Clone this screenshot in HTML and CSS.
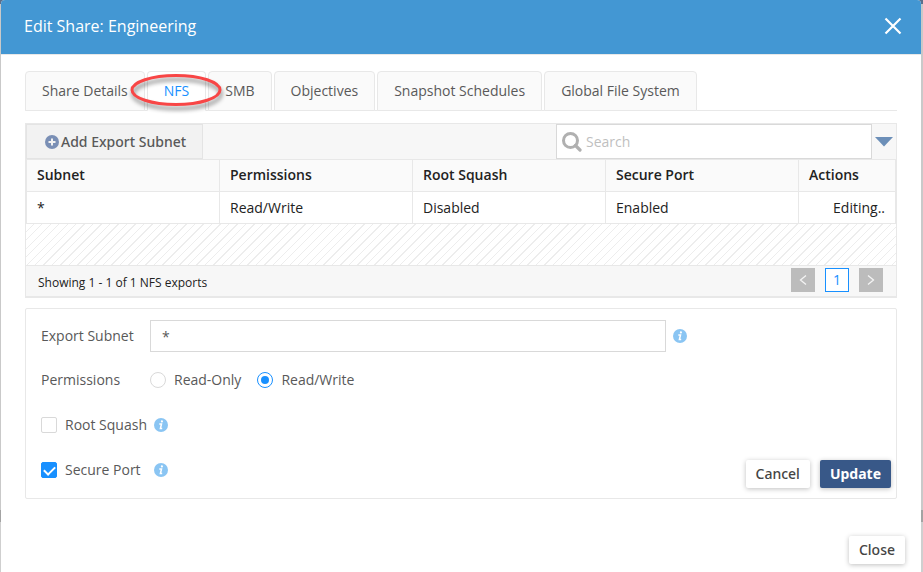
FILE: index.html
```html
<!DOCTYPE html>
<html lang="en">
<head>
    <meta charset="UTF-8">
    <meta name="viewport" content="width=device-width, initial-scale=1.0">
    <title>Edit Share: Engineering</title>
    <link rel="stylesheet" href="styles.css">
</head>
<body>
    <div class="modal">
        <header class="modal-header">
            <h1>Edit Share: Engineering</h1>
            <button type="button" class="modal-x" aria-label="Close dialog">
                <svg width="18" height="18" viewBox="0 0 18 18"><path d="M1.5 1.5l15 15M16.5 1.5l-15 15" stroke="#fff" stroke-width="2.2"/></svg>
            </button>
        </header>

        <main class="modal-body">
            <nav class="tabs">
                <button type="button" class="tab">Share Details</button>
                <button type="button" class="tab active">NFS
                    <svg class="tab-mark" width="100" height="48" viewBox="0 0 100 48"><ellipse cx="49" cy="23" rx="44" ry="14.5" fill="none" stroke="#f84646" stroke-width="3"/></svg>
                </button>
                <button type="button" class="tab">SMB</button>
                <button type="button" class="tab">Objectives</button>
                <button type="button" class="tab">Snapshot Schedules</button>
                <button type="button" class="tab">Global File System</button>
            </nav>

            <section class="exports">
                <div class="toolbar">
                    <button type="button" class="add-btn">
                        <svg width="14" height="14" viewBox="0 0 14 14"><circle cx="7" cy="7" r="7" fill="#7a8fb5"/><path d="M7 3.5v7M3.5 7h7" stroke="#f2f2f2" stroke-width="2"/></svg>
                        Add Export Subnet
                    </button>
                    <div class="search">
                        <svg width="20" height="20" viewBox="0 0 20 20" fill="none" stroke="#b0b0b0"><circle cx="8.5" cy="8.5" r="7" stroke-width="3"/><path d="M13.5 13.5l4.5 4.5" stroke-width="3.2" stroke-linecap="round"/></svg>
                        <input type="text" placeholder="Search" aria-label="Search">
                    </div>
                    <button type="button" class="filter-btn" aria-label="Search options">
                        <svg width="18" height="10" viewBox="0 0 18 10"><path d="M0 0h18L9 9.5z" fill="#6c8fb8"/></svg>
                    </button>
                </div>
                <table>
                    <thead>
                        <tr>
                            <th>Subnet</th>
                            <th>Permissions</th>
                            <th>Root Squash</th>
                            <th>Secure Port</th>
                            <th class="actions">Actions</th>
                        </tr>
                    </thead>
                    <tbody>
                        <tr>
                            <td>*</td>
                            <td>Read/Write</td>
                            <td>Disabled</td>
                            <td>Enabled</td>
                            <td class="actions">Editing..</td>
                        </tr>
                    </tbody>
                </table>
                <div class="empty-rows"></div>
                <div class="table-footer">
                    <span>Showing 1 - 1 of 1 NFS exports</span>
                    <div class="pager">
                        <button type="button" aria-label="Previous page"><svg width="8" height="12" viewBox="0 0 8 12"><path d="M7 1.5L1.5 6 7 10.5" fill="none" stroke="#f4f4f4" stroke-width="1.3"/></svg></button>
                        <button type="button" class="current">1</button>
                        <button type="button" aria-label="Next page"><svg width="8" height="12" viewBox="0 0 8 12"><path d="M1 1.5L6.5 6 1 10.5" fill="none" stroke="#f4f4f4" stroke-width="1.3"/></svg></button>
                    </div>
                </div>
            </section>

            <form class="edit-form">
                <div class="row first">
                    <label class="row-label" for="subnet">Export Subnet</label>
                    <input type="text" id="subnet" class="text-input" value="*">
                    <svg class="info" width="14" height="14" viewBox="0 0 14 14"><circle cx="7" cy="7" r="7" fill="#8ac5f3"/><circle cx="7.9" cy="3.4" r="1.1" fill="#fff"/><path d="M5.3 6h2.2L6.4 10.6h1.8" fill="none" stroke="#fff" stroke-width="1.5"/></svg>
                </div>
                <div class="row" role="radiogroup" aria-labelledby="perm-label">
                    <span class="row-label" id="perm-label">Permissions</span>
                    <label class="choice"><input type="radio" name="permissions">Read-Only</label>
                    <label class="choice"><input type="radio" name="permissions" checked>Read/Write</label>
                </div>
                <div class="row">
                    <label class="choice check"><input type="checkbox">Root Squash</label>
                    <svg class="info" width="14" height="14" viewBox="0 0 14 14"><circle cx="7" cy="7" r="7" fill="#8ac5f3"/><circle cx="7.9" cy="3.4" r="1.1" fill="#fff"/><path d="M5.3 6h2.2L6.4 10.6h1.8" fill="none" stroke="#fff" stroke-width="1.5"/></svg>
                </div>
                <div class="row last">
                    <label class="choice check"><input type="checkbox" checked>Secure Port</label>
                    <svg class="info" width="14" height="14" viewBox="0 0 14 14"><circle cx="7" cy="7" r="7" fill="#8ac5f3"/><circle cx="7.9" cy="3.4" r="1.1" fill="#fff"/><path d="M5.3 6h2.2L6.4 10.6h1.8" fill="none" stroke="#fff" stroke-width="1.5"/></svg>
                    <div class="buttons">
                        <button type="button" class="btn">Cancel</button>
                        <button type="submit" class="btn primary">Update</button>
                    </div>
                </div>
            </form>
        </main>

        <footer class="modal-footer">
            <button type="button" class="btn">Close</button>
        </footer>
    </div>
</body>
</html>
```
FILE: styles.css
```css
* {
    box-sizing: border-box;
    margin: 0;
    padding: 0;
}

body {
    font-family: 'Open Sans', 'Noto Sans', sans-serif;
    font-size: 14px;
    line-height: 20px;
    color: #595959;
    background: linear-gradient(#5b6f8c 4px, #c9c9c9 4px, #c9c9c9 510px, #a3a3a3 510px, #a3a3a3 522px, #cfcfcf 522px);
    padding: 0 2px 0 1px;
}

button,
input {
    font: inherit;
    color: inherit;
}

button {
    cursor: pointer;
    border: none;
    background: none;
}

svg {
    display: block;
    flex: none;
}

.modal {
    min-height: 100vh;
    background: #fff;
    border-radius: 4px 4px 0 0;
}

/* Header */
.modal-header {
    display: flex;
    align-items: center;
    justify-content: space-between;
    height: 55px;
    padding: 0 19px 3px 23px;
    background: #4397d3;
    border-bottom: 1px solid #e8e8e8;
    border-radius: 4px 4px 0 0;
    color: #fff;
}

.modal-header h1 {
    font-size: 16px;
    font-weight: 400;
}

.modal-body {
    padding: 16px 24px 0;
}

/* Tabs */
.tabs {
    display: flex;
    gap: 2px;
    border-bottom: 1px solid #e8e8e8;
    margin-bottom: 12px;
}

.tab {
    position: relative;
    height: 40px;
    padding: 0 16px;
    margin-bottom: -1px;
    background: #fafafa;
    border: 1px solid #e8e8e8;
    border-radius: 4px 4px 0 0;
    white-space: nowrap;
}

.tab.active {
    background: #fff;
    border-bottom-color: #fff;
    color: #1890ff;
    z-index: 1;
}

.tab-mark {
    position: absolute;
    top: 50%;
    left: 50%;
    transform: translate(-50%, -50%);
    filter: drop-shadow(1px 4px 2px rgba(0, 0, 0, 0.45));
    pointer-events: none;
}

/* Exports table */
.exports {
    border: 1px solid #e8e8e8;
    border-bottom-width: 2px;
    margin-bottom: 10px;
}

.toolbar {
    display: flex;
    height: 35px;
    background: #f7f7f7;
}

.add-btn {
    display: flex;
    align-items: center;
    gap: 2px;
    padding: 0 16px 0 18px;
    background: #f2f2f2;
    border: 1px solid #e4e4e4;
    font-family: 'Noto Sans', sans-serif;
    font-weight: 500;
}

.search {
    display: flex;
    align-items: center;
    gap: 4px;
    width: 316px;
    margin-left: auto;
    padding: 0 5px;
    background: #fff;
    border: 1px solid #d9d9d9;
}

.search input {
    flex: 1;
    min-width: 0;
    border: none;
    outline: none;
    background: none;
}

.search input::placeholder {
    color: #bfbfbf;
}

.filter-btn {
    padding: 0 3px;
}

table {
    width: 100%;
    table-layout: fixed;
    border-collapse: separate;
    border-spacing: 0;
    border-left: 1px solid #e8e8e8;
    color: #222;
}

th,
td {
    height: 32px;
    padding: 0 10px;
    text-align: left;
    border-right: 1px solid #e8e8e8;
    border-bottom: 1px solid #e8e8e8;
}

th {
    height: 33px;
    padding-bottom: 2px;
    background: #fafafa;
    border-top: 1px solid #e8e8e8;
    font-weight: 600;
}

.actions {
    width: 97px;
}

td.actions {
    text-align: right;
}

.empty-rows {
    height: 41px;
    background: repeating-linear-gradient(135deg, #fff 0, #fff 5px, #ededed 5px, #ededed 6px);
}

.table-footer {
    display: flex;
    justify-content: space-between;
    height: 31px;
    padding: 2px 13px 0 12px;
    background: #f7f7f7;
    border-top: 1px solid #e8e8e8;
    font-size: 12px;
    line-height: 30px;
    color: #222;
}

.pager {
    display: flex;
    gap: 10px;
}

.pager button {
    display: flex;
    align-items: center;
    justify-content: center;
    width: 24px;
    height: 24px;
    background: #bcbcbc;
}

.pager .current {
    background: #fff;
    border: 1px solid #1890ff;
    color: #1890ff;
    font-size: 14px;
    line-height: 20px;
}

/* Edit form */
.edit-form {
    padding: 11px 5px 9px 15px;
    border: 1px solid #e8e8e8;
    border-radius: 2px;
}

.row {
    display: flex;
    align-items: center;
    height: 32px;
    margin-bottom: 13px;
}

.row.first {
    margin-bottom: 12px;
}

.row.last {
    margin-bottom: 3px;
}

.row-label {
    width: 109px;
}

.text-input {
    width: 516px;
    height: 32px;
    padding: 0 11px;
    border: 1px solid #d9d9d9;
}

.info {
    margin-left: 7px;
}

.choice {
    display: flex;
    align-items: center;
    gap: 8px;
    margin-right: 16px;
}

.choice.check {
    min-width: 106px;
    margin-right: 0;
}

.choice input {
    appearance: none;
    display: grid;
    place-items: center;
    width: 16px;
    height: 16px;
    background: #fff;
    border: 1px solid #d9d9d9;
}

.choice input[type="radio"] {
    border-radius: 50%;
}

.choice input[type="radio"]:checked {
    border-color: #1890ff;
}

.choice input[type="radio"]:checked::before {
    content: "";
    width: 8px;
    height: 8px;
    border-radius: 50%;
    background: #1890ff;
}

.choice input[type="checkbox"] {
    border-radius: 2px;
}

.choice input[type="checkbox"]:checked {
    background: #1890ff;
    border-color: #1890ff;
}

.choice input[type="checkbox"]:checked::before {
    content: "";
    width: 5px;
    height: 9px;
    margin-bottom: 2px;
    border: solid #fff;
    border-width: 0 2px 2px 0;
    transform: rotate(45deg);
}

.buttons {
    display: flex;
    gap: 10px;
    margin-left: auto;
    padding-top: 8px;
}

.btn {
    height: 28px;
    padding: 0 10px;
    background: #fff;
    border-radius: 2px;
    box-shadow: 0 1px 5px rgba(0, 0, 0, 0.25);
    color: #444;
    font-family: 'Noto Sans', sans-serif;
    font-weight: 500;
}

.btn.primary {
    background: #385888;
    color: #fff;
    font-weight: 700;
}

.modal-footer {
    display: flex;
    justify-content: flex-end;
    padding: 37px 16px 8px;
}
```
